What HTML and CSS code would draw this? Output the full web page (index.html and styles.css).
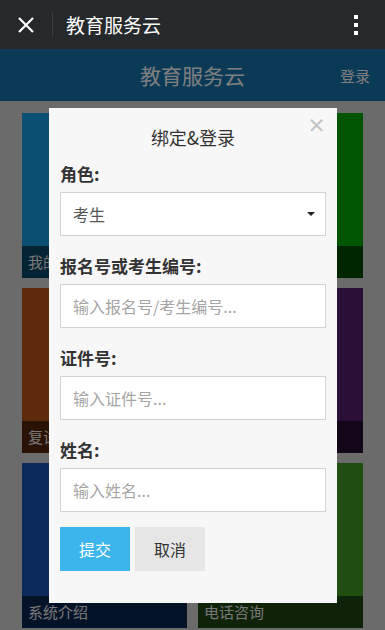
FILE: index.html
```html
<!DOCTYPE html>
<html lang="zh-CN">
  <head>
    <meta charset="UTF-8" />
    <meta name="viewport" content="width=device-width, initial-scale=1.0" />
    <title>教育服务云</title>
    <link rel="stylesheet" href="styles.css">
  </head>
  <body>
    <div class="wx-bar">
      <span class="wx-close">
        <svg width="18" height="18" viewBox="0 0 18 18">
          <path d="M2 2 L16 16 M16 2 L2 16" stroke="#fff" stroke-width="2.2" fill="none" />
        </svg>
      </span>
      <span class="wx-sep"></span>
      <span class="wx-title">教育服务云</span>
      <span class="wx-more"><i></i><i></i><i></i></span>
    </div>

    <div class="page">
      <header class="head">
        <span></span>
        <h1>教育服务云</h1>
        <a class="login">登录</a>
      </header>
      <div class="tiles">
        <div class="tile t-blue"><span class="cap">我的成绩</span></div>
        <div class="tile t-green"><span class="cap">成绩查询</span></div>
        <div class="tile t-orange"><span class="cap">复试通知</span></div>
        <div class="tile t-purple"><span class="cap">录取查询</span></div>
        <div class="tile t-navy"><span class="cap">系统介绍</span></div>
        <div class="tile t-lime"><span class="cap">电话咨询</span></div>
      </div>
    </div>

    <div class="mask"></div>
    <div class="modal">
      <span class="modal-close">×</span>
      <h2 class="modal-title">绑定&amp;登录</h2>
      <div class="field">
        <label>角色:</label>
        <div class="select-wrap">
          <select class="control">
            <option>考生</option>
            <option>家长</option>
          </select>
          <span class="caret"></span>
        </div>
      </div>
      <div class="field">
        <label>报名号或考生编号:</label>
        <input class="control" type="text" placeholder="输入报名号/考生编号..." />
      </div>
      <div class="field">
        <label>证件号:</label>
        <input class="control" type="text" placeholder="输入证件号..." />
      </div>
      <div class="field">
        <label>姓名:</label>
        <input class="control" type="text" placeholder="输入姓名..." />
      </div>
      <div class="actions">
        <button class="btn btn-primary">提交</button>
        <button class="btn btn-default">取消</button>
      </div>
    </div>
  </body>
</html>
```

FILE: styles.css
```css
* {
  box-sizing: border-box;
}

body {
  margin: 0;
  padding: 0;
  font-family: "Noto Sans CJK SC", "Noto Sans", sans-serif;
  background: #d6d6d6;
  color: #333;
}

/* wechat top bar */
.wx-bar {
  height: 49px;
  background: #25292b;
  display: flex;
  align-items: center;
  color: #fff;
}

.wx-close {
  width: 52px;
  padding-left: 17px;
  display: flex;
  align-items: center;
}

.wx-sep {
  width: 1px;
  height: 25px;
  background: #3a3e40;
}

.wx-title {
  flex: 1;
  padding-left: 13px;
  font-size: 19px;
  line-height: 26px;
}

.wx-more {
  width: 60px;
  display: flex;
  flex-direction: column;
  align-items: center;
  gap: 4px;
  padding-left: 1px;
}

.wx-more i {
  width: 4px;
  height: 4px;
  background: #fff;
}

/* page */
.head {
  height: 52px;
  background: #1674ae;
  display: grid;
  grid-template-columns: 1fr auto 1fr;
  align-items: center;
  padding: 0 15px;
}

.head h1 {
  margin: 0;
  font-size: 21px;
  font-weight: normal;
  color: #fff;
  line-height: 28px;
}

.login {
  justify-self: end;
  font-size: 15px;
  color: #fff;
}

.tiles {
  display: grid;
  grid-template-columns: 1fr 1fr;
  gap: 10px 11px;
  padding: 12px 22px 30px;
}

.tile {
  aspect-ratio: 1 / 1;
  display: flex;
  align-items: flex-end;
}

.cap {
  width: 100%;
  height: 32px;
  line-height: 32px;
  padding-left: 6px;
  font-size: 15px;
  color: #eee;
  background: rgba(0, 0, 0, 0.55);
}

.t-blue { background: #169ee4; }
.t-green { background: #00aa00; }
.t-orange { background: #bc5418; }
.t-purple { background: #561e6c; }
.t-navy { background: #1854b6; }
.t-lime { background: #3e9c20; }

/* modal */
.mask {
  position: fixed;
  top: 49px;
  left: 0;
  right: 0;
  bottom: 0;
  background: rgba(0, 0, 0, 0.5);
}

.modal {
  position: fixed;
  top: 108px;
  left: 49px;
  width: 288px;
  background: #f7f7f7;
  padding: 16px 11px 32px;
}

.modal-close {
  position: absolute;
  top: 6px;
  right: 11px;
  font-size: 19px;
  line-height: 22px;
  font-weight: bold;
  color: #c2c2c2;
}

.modal-title {
  margin: 0 0 13px;
  text-align: center;
  font-size: 18px;
  font-weight: normal;
  line-height: 26px;
  color: #333;
}

.field {
  margin-bottom: 19px;
}

.field label {
  display: block;
  font-size: 17px;
  font-weight: bold;
  line-height: 22px;
  margin-bottom: 7px;
  color: #333;
}

.control {
  display: block;
  width: 100%;
  height: 44px;
  padding: 0 12px;
  border: 1px solid #d2d2d2;
  border-radius: 0;
  background: #fff;
  font-family: inherit;
  font-size: 16px;
  color: #555;
  outline: none;
  appearance: none;
}

.control::placeholder {
  color: #a5a5a5;
}

.select-wrap {
  position: relative;
}

.caret {
  position: absolute;
  right: 11px;
  top: 20px;
  border-left: 4px solid transparent;
  border-right: 4px solid transparent;
  border-top: 4px solid #222;
}

.actions {
  display: flex;
  gap: 5px;
  margin-top: -4px;
}

.btn {
  width: 70px;
  height: 44px;
  border: none;
  font-family: inherit;
  font-size: 16px;
}

.btn-primary {
  background: #3cb4ec;
  color: #fff;
}

.btn-default {
  background: #e6e6e6;
  color: #333;
}
```
